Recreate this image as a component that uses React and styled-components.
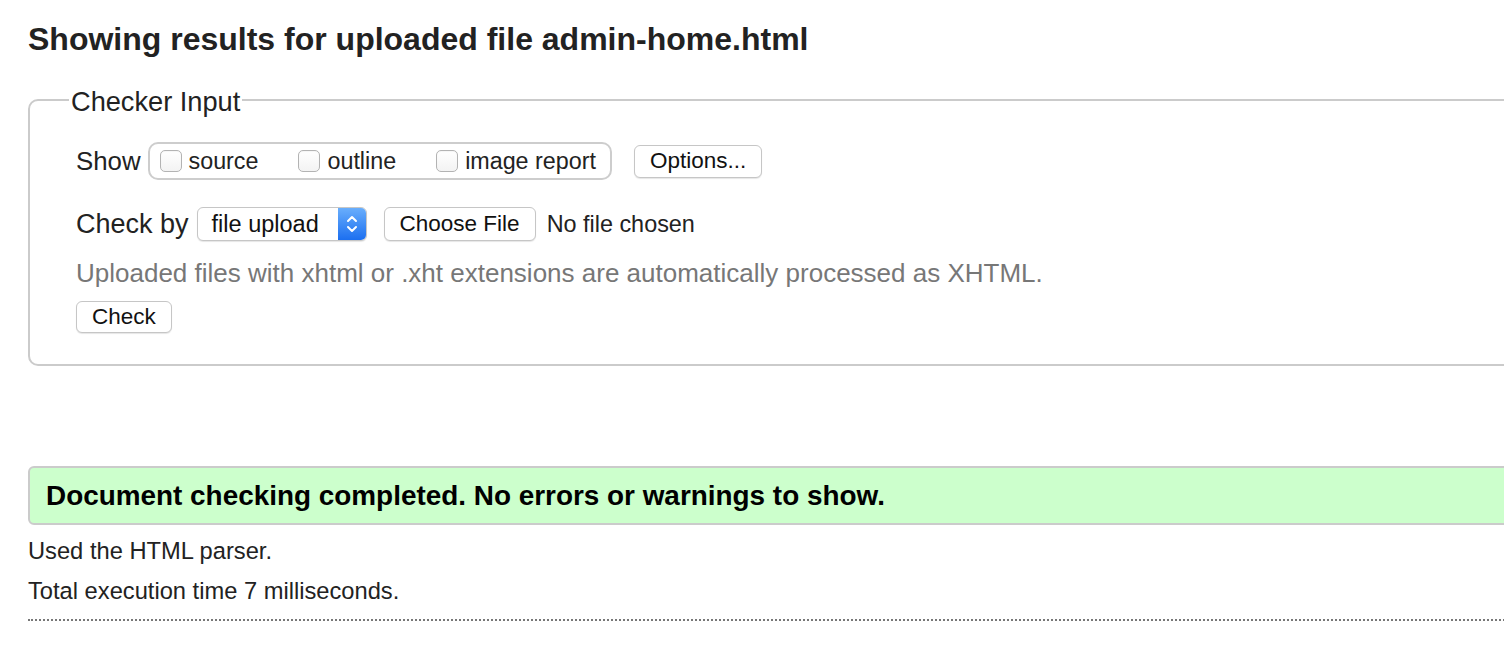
import React from 'react';
import styled, { createGlobalStyle } from 'styled-components';

const GlobalStyle = createGlobalStyle`
    html, body {
        margin: 0;
        padding: 0;
        overflow: hidden;
        background: #fff;
        color: #222;
        font-family: "Liberation Sans", Arial, Helvetica, sans-serif;
    }
`;

const Page = styled.main`
    width: 1540px;
    padding: 21px 0 0 28px;
`;

const Title = styled.h2`
    margin: 0;
    font-size: 32px;
    font-weight: bold;
    line-height: 37px;
    color: #222;
`;

const Fieldset = styled.fieldset`
    margin: 25px 0 0;
    padding: 0;
    min-width: 0;
    border: 2px solid #cbcbcb;
    border-radius: 10px;
`;

const Legend = styled.legend`
    margin-left: 39px;
    padding: 4px 2px 0;
    font-size: 27.2px;
    line-height: 30px;
    color: #222;
`;

const Body = styled.div`
    display: flex;
    flex-direction: column;
    align-items: flex-start;
    padding: 25px 0 31px 46px;
`;

const Row = styled.div`
    display: flex;
    align-items: center;
    height: ${(p) => p.$height}px;
    margin-top: ${(p) => p.$top || 0}px;
`;

const RowLabel = styled.span`
    font-size: ${(p) => p.$size || 26.5}px;
    margin-right: ${(p) => p.$gap || 8}px;
`;

const Group = styled.div`
    display: flex;
    align-items: center;
    box-sizing: border-box;
    height: 38px;
    padding: 0 14px 0 10px;
    border: 2px solid #cdcdcd;
    border-radius: 10px;
    gap: 40px;
`;

const Option = styled.label`
    display: flex;
    align-items: center;
    gap: 7px;
    font-size: 23.3px;
`;

const Box = styled.input`
    appearance: none;
    box-sizing: border-box;
    margin: 0;
    width: 22px;
    height: 22px;
    border: 1px solid #b3b3b3;
    border-radius: 5px;
    background: linear-gradient(#ffffff, #f3f3f3);
    box-shadow: inset 0 1px 1px rgba(0, 0, 0, 0.04);
`;

const Button = styled.button`
    box-sizing: border-box;
    height: ${(p) => p.$height || 33}px;
    margin-left: ${(p) => p.$gap || 0}px;
    padding: 0 15px;
    border: 1px solid #c6c6c6;
    border-radius: 6px;
    background: #fff;
    box-shadow: 0 1px 1px rgba(0, 0, 0, 0.1);
    font-family: inherit;
    font-size: 22.5px;
    line-height: 1;
    color: #111;
`;

const Select = styled.div`
    display: flex;
    box-sizing: border-box;
    width: 170px;
    height: 34px;
    border: 1px solid #c6c6c6;
    border-radius: 6px;
    background: #fff;
    box-shadow: 0 1px 1px rgba(0, 0, 0, 0.1);
    overflow: hidden;
`;

const SelectValue = styled.span`
    flex: 1;
    display: flex;
    align-items: center;
    padding-left: 14px;
    font-size: 23.5px;
    color: #111;
`;

const Stepper = styled.span`
    display: flex;
    align-items: center;
    justify-content: center;
    width: 28px;
    background: linear-gradient(#69aefc, #1c6ff0);
`;

const FileName = styled.span`
    margin-left: 11px;
    font-size: 23.4px;
    color: #222;
`;

const Hint = styled.p`
    margin: 18px 0 0;
    font-size: 26px;
    line-height: 28px;
    color: #777;
`;

const Success = styled.div`
    display: flex;
    align-items: center;
    box-sizing: border-box;
    height: 59px;
    margin-top: 100px;
    padding: 0 16px;
    border: 2px solid #cbcbcb;
    border-radius: 6px;
    background: #ccffcc;
    font-size: 27.9px;
    font-weight: bold;
    color: #000;
`;

const Info = styled.p`
    margin: ${(p) => p.$top || 0}px 0 0;
    font-size: 23.7px;
    line-height: 40px;
    color: #222;
`;

const Rule = styled.hr`
    margin: 8px 0 0;
    border: none;
    border-top: 2px dotted #777;
    height: 0;
`;

function StepperIcon() {
    return (
        <svg width="14" height="26" viewBox="0 0 14 26" fill="none">
            <path d="M3 10 L7 6 L11 10" stroke="#fff" strokeWidth="2" strokeLinecap="round" strokeLinejoin="round" />
            <path d="M3 16 L7 20 L11 16" stroke="#fff" strokeWidth="2" strokeLinecap="round" strokeLinejoin="round" />
        </svg>
    );
}

export default function App() {
    const options = ['source', 'outline', 'image report'];

    return (
        <Page>
            <GlobalStyle />
            <Title>Showing results for uploaded file admin-home.html</Title>
            <Fieldset>
                <Legend>Checker Input</Legend>
                <Body>
                    <Row $height={38}>
                        <RowLabel $size={25.8} $gap={7}>Show</RowLabel>
                        <Group>
                            {options.map((name) => (
                                <Option key={name}>
                                    <Box type="checkbox" />
                                    {name}
                                </Option>
                            ))}
                        </Group>
                        <Button $gap={22}>Options...</Button>
                    </Row>
                    <Row $height={34} $top={27}>
                        <RowLabel $size={27}>Check by</RowLabel>
                        <Select>
                            <SelectValue>file upload</SelectValue>
                            <Stepper>
                                <StepperIcon />
                            </Stepper>
                        </Select>
                        <Button $gap={17} $height={34}>Choose File</Button>
                        <FileName>No file chosen</FileName>
                    </Row>
                    <Hint>Uploaded files with xhtml or .xht extensions are automatically processed as XHTML.</Hint>
                    <Row $height={32} $top={14}>
                        <Button $height={32}>Check</Button>
                    </Row>
                </Body>
            </Fieldset>
            <Success>Document checking completed. No errors or warnings to show.</Success>
            <Info $top={6}>Used the HTML parser.</Info>
            <Info>Total execution time 7 milliseconds.</Info>
            <Rule />
        </Page>
    );
}
